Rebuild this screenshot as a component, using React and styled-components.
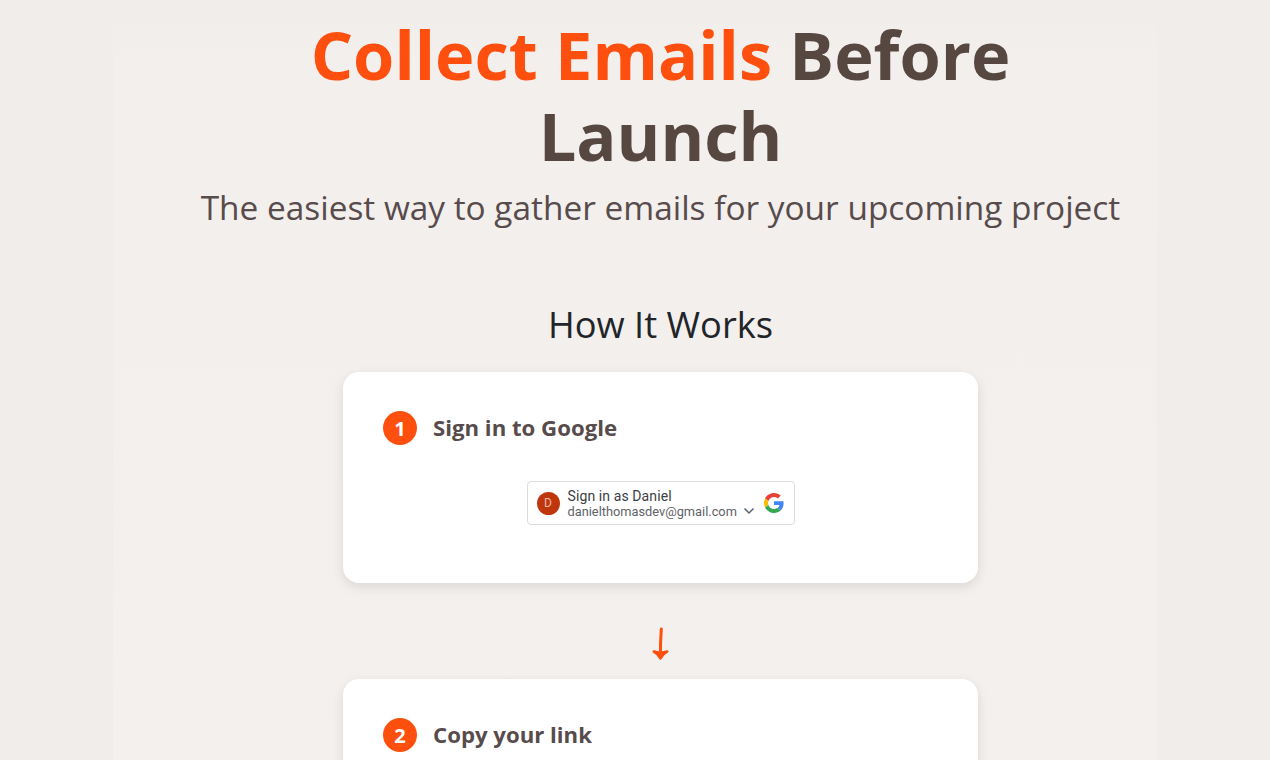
import React from 'react';
import styled, { createGlobalStyle } from 'styled-components';

const GlobalStyle = createGlobalStyle`
  html, body {
    margin: 0;
    padding: 0;
    height: 100%;
    overflow: hidden;
    background: #f1edeb;
    font-family: 'Open Sans', sans-serif;
  }
`;

const GoogleLogo = () => (
  <svg width="20" height="20" viewBox="0 0 48 48">
    <path fill="#EA4335" d="M24 9.5c3.54 0 6.71 1.22 9.21 3.6l6.85-6.85C35.9 2.38 30.47 0 24 0 14.62 0 6.51 5.38 2.56 13.22l7.98 6.19C12.43 13.72 17.74 9.5 24 9.5z" />
    <path fill="#4285F4" d="M46.98 24.55c0-1.57-.15-3.09-.38-4.55H24v9.02h12.94c-.58 2.96-2.26 5.48-4.78 7.18l7.73 6c4.51-4.18 7.09-10.36 7.09-17.65z" />
    <path fill="#FBBC05" d="M10.53 28.59c-.48-1.45-.76-2.99-.76-4.59s.27-3.14.76-4.59l-7.98-6.19C.92 16.46 0 20.12 0 24c0 3.88.92 7.54 2.56 10.78l7.97-6.19z" />
    <path fill="#34A853" d="M24 48c6.48 0 11.93-2.13 15.89-5.81l-7.73-6c-2.15 1.45-4.92 2.3-8.16 2.3-6.26 0-11.57-4.22-13.47-9.91l-7.98 6.19C6.51 42.62 14.62 48 24 48z" />
  </svg>
);

const Chevron = () => (
  <svg width="12" height="12" viewBox="0 0 12 12" fill="none">
    <path d="M1.5 3.5l4.5 4.5 4.5-4.5" stroke="#5f6368" strokeWidth="1.5" />
  </svg>
);

const Arrow = () => (
  <svg width="24" height="38" viewBox="0 0 24 38" fill="none">
    <path d="M12.300 4c-.6 8-1 17-.9 28" stroke="#ff4f0f" strokeWidth="3" strokeLinecap="round" />
    <path d="M4.800 26.500c2.600 1.200 4.800 3.400 6.600 7 1.600-3.400 3.800-5.600 6.800-7l-6.800 1.500z" fill="#ff4f0f" stroke="#ff4f0f" strokeWidth="2.600" strokeLinecap="round" strokeLinejoin="round" />
  </svg>
);

const App = () => (
  <Page>
    <GlobalStyle />
    <Column>
      <Title>
        <Accent>Collect Emails</Accent> Before Launch
      </Title>
      <Subtitle>The easiest way to gather emails for your upcoming project</Subtitle>
      <SectionTitle>How It Works</SectionTitle>
      <Card>
        <StepHeader>
          <StepNumber>1</StepNumber>
          <StepTitle>Sign in to Google</StepTitle>
        </StepHeader>
        <SignInRow>
          <SignInButton>
            <Avatar>D</Avatar>
            <Account>
              <AccountName>Sign in as Daniel</AccountName>
              <AccountEmail>
                danielthomasdev@gmail.com
                <Chevron />
              </AccountEmail>
            </Account>
            <GoogleLogo />
          </SignInButton>
        </SignInRow>
      </Card>
      <ArrowRow>
        <Arrow />
      </ArrowRow>
      <Card>
        <StepHeader>
          <StepNumber>2</StepNumber>
          <StepTitle>Copy your link</StepTitle>
        </StepHeader>
      </Card>
    </Column>
  </Page>
);

export default App;

const Page = styled.div`
  height: 760px;
  overflow: hidden;
  display: flex;
  justify-content: center;
  background: #f1edeb;
`;

const Column = styled.main`
  box-sizing: border-box;
  width: 1044px;
  padding-left: 51px;
  display: flex;
  flex-direction: column;
  align-items: center;
  background: linear-gradient(to bottom, #f1edeb, #f3efed 60px, #f4f0ee);
`;

const Title = styled.h1`
  width: 760px;
  margin: 14px 0 0;
  font-size: 66.7px;
  line-height: 81px;
  font-weight: 700;
  text-align: center;
  color: #574741;
`;

const Accent = styled.span`
  color: #ff4f0f;
`;

const Subtitle = styled.p`
  margin: 6px 0 0;
  font-size: 33.4px;
  line-height: 50px;
  color: #574b4b;
  white-space: nowrap;
`;

const SectionTitle = styled.h2`
  margin: 67px 0 23px;
  font-size: 36.3px;
  line-height: 50px;
  font-weight: 400;
  color: #212529;
`;

const Card = styled.section`
  flex-shrink: 0;
  box-sizing: border-box;
  width: 635px;
  min-height: 211px;
  padding: 39px 40px;
  background: #fff;
  border-radius: 16px;
  box-shadow: 0 4px 12px rgba(0, 0, 0, 0.1);
`;

const StepHeader = styled.div`
  display: flex;
  align-items: center;
  gap: 16px;
`;

const StepNumber = styled.span`
  width: 34px;
  height: 34px;
  border-radius: 50%;
  display: flex;
  align-items: center;
  justify-content: center;
  background: #ff4f0f;
  color: #fff;
  font-size: 20px;
  font-weight: 700;
`;

const StepTitle = styled.h3`
  margin: 0 0 2px;
  font-size: 22.2px;
  font-weight: 700;
  color: #574b4b;
`;

const SignInRow = styled.div`
  margin-top: 36px;
  display: flex;
  justify-content: center;
`;

const SignInButton = styled.div`
  box-sizing: border-box;
  width: 268px;
  height: 44px;
  padding: 0 10px 0 9px;
  display: flex;
  align-items: center;
  justify-content: space-between;
  border: 1px solid #dadce0;
  border-radius: 4px;
  font-family: Roboto, sans-serif;
`;

const Avatar = styled.span`
  width: 23px;
  height: 23px;
  border-radius: 50%;
  display: flex;
  align-items: center;
  justify-content: center;
  background: #bf360c;
  color: #f4b8a2;
  font-size: 12px;
`;

const Account = styled.div`
  flex: 1;
  margin-left: 8px;
  display: flex;
  flex-direction: column;
`;

const AccountName = styled.span`
  font-size: 14px;
  line-height: 16px;
  letter-spacing: 0.1px;
  color: #3c4043;
`;

const AccountEmail = styled.span`
  display: flex;
  align-items: center;
  gap: 6px;
  font-size: 12.8px;
  line-height: 15px;
  color: #5f6368;
`;

const ArrowRow = styled.div`
  flex-shrink: 0;
  box-sizing: border-box;
  height: 96px;
  padding-top: 42px;
  display: flex;
  justify-content: center;
`;
